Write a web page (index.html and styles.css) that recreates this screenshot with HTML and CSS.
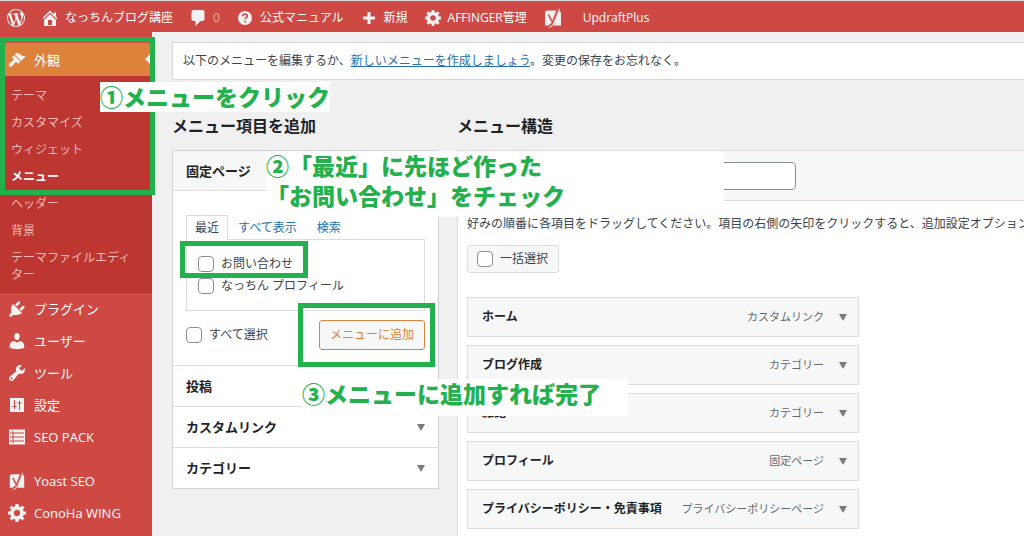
FILE: index.html
```html
<!DOCTYPE html>
<html lang="ja">
<head>
<meta charset="utf-8">
<title>メニュー</title>
<link rel="stylesheet" href="styles.css">
</head>
<body>
<svg class="sprite" aria-hidden="true">
  <symbol id="wp" viewBox="0 0 20 20"><path d="M20 10c0-5.51-4.49-10-10-10C4.48 0 0 4.49 0 10c0 5.52 4.48 10 10 10 5.51 0 10-4.48 10-10zM7.78 15.37L4.37 6.22c.55-.02 1.17-.08 1.17-.08.5-.06.44-1.13-.06-1.11 0 0-1.45.11-2.37.11-.18 0-.37 0-.58-.01C4.12 2.69 6.87 1.11 10 1.11c2.33 0 4.45.87 6.05 2.34-.68-.11-1.65.39-1.65 1.58 0 .74.45 1.36.9 2.1.35.61.55 1.36.55 2.46 0 1.49-1.4 5-1.4 5l-3.03-8.37c.54-.02.82-.17.82-.17.5-.05.44-1.25-.06-1.22 0 0-1.44.12-2.38.12-.87 0-2.33-.12-2.33-.12-.5-.03-.56 1.2-.06 1.22l.92.08 1.26 3.41zM17.41 10c.24-.64.74-1.87.43-4.25.7 1.29 1.05 2.71 1.05 4.25 0 3.29-1.73 6.24-4.4 7.78.97-2.59 1.94-5.2 2.92-7.78zM6.1 18.09C3.12 16.65 1.11 13.53 1.11 10c0-1.3.23-2.48.72-3.59C3.25 10.3 4.67 14.2 6.1 18.09zm4.03-6.63l2.58 6.98c-.86.29-1.76.45-2.71.45-.79 0-1.57-.11-2.29-.33.81-2.38 1.62-4.74 2.42-7.1z"/></symbol>
  <symbol id="home" viewBox="2 2 16 16"><path d="M16 8.5l1.53 1.53-1.06 1.06L10 4.6l-6.47 6.49-1.06-1.06L10 2.5l4 4v-2h2v4zm-6-2.46l6 5.99V18H4v-5.97zM12 17v-5H8v5h4z"/></symbol>
  <symbol id="comment" viewBox="2 2 15 16"><path d="M5 2h9c1.1 0 2 .9 2 2v7c0 1.1-.9 2-2 2h-2l-5 5v-5H5c-1.1 0-2-.9-2-2V4c0-1.1.9-2 2-2z"/></symbol>
  <symbol id="help" viewBox="0 0 16 16"><circle cx="8" cy="8" r="7"/><path class="cut-line" d="M5.8 6.2c0-3 4.5-2.8 4.5-.2 0 1.6-2.2 1.6-2.2 3.3M8.1 10.8v1.7"/></symbol>
  <symbol id="plus" viewBox="0 0 16 16"><path d="M6.500 2h3v4.500H14v3H9.500V14h-3V9.500H2v-3h4.500z"/></symbol>
  <symbol id="gear" viewBox="1 2 17 17"><path d="M18 12h-2.180c-.17.7-.44 1.350-.81 1.930l1.540 1.540-2.100 2.100-1.540-1.540c-.58.360-1.230.630-1.910.790V19H8v-2.180c-.68-.16-1.330-.43-1.910-.79l-1.540 1.540-2.120-2.120 1.540-1.540c-.36-.58-.63-1.230-.79-1.910H1V9.030h2.170c.16-.7.440-1.350.8-1.940L2.430 5.550l2.100-2.100 1.540 1.540c.58-.37 1.240-.64 1.930-.81V2h3v2.180c.68.160 1.330.430 1.910.790l1.540-1.540 2.120 2.120-1.540 1.540c.36.590.640 1.240.8 1.940H18V12zm-8.500 1.500c1.660 0 3-1.340 3-3s-1.340-3-3-3-3 1.340-3 3 1.340 3 3 3z"/></symbol>
  <symbol id="yoast" viewBox="0 0 18 20"><path d="M3.500 2.500H13L8 17.500H1V5C1 3.500 2 2.500 3.500 2.500zM15 3c1.300.3 2 1.200 2 2.500v12H9.500z"/><path class="cut-line" d="M4.500 6.500l3.300 7M13.500 1.500L8.800 13.500C8 16 7 17.500 4.500 17.800"/><path class="edge" d="M15.500.8L10 14.500C9 17.500 7.500 19.200 4.500 19.300"/></symbol>
  <symbol id="brush" viewBox="0 1 20 18"><path d="M14.480 11.060L7.410 3.990l1.500-1.500c.5-.56 2.300-.47 3.510.320 1.210.8 1.430 1.280 2.910 2.100 1.180.640 2.450 1.260 4.450.850zm-.71.710L6.700 4.700 4.930 6.470c-.39.390-.39 1.020 0 1.410l1.060 1.060c.39.390.39 1.030 0 1.420-.6.6-1.430 1.110-2.210 1.690-.35.260-.7.530-1.010.840C1.430 14.230.4 16.080 1.400 17.070c.99 1 2.840-.03 4.180-1.360.31-.31.580-.66.850-1.020.57-.78 1.080-1.610 1.690-2.210.39-.39 1.020-.39 1.410 0l1.060 1.060c.39.390 1.020.390 1.410 0z"/></symbol>
  <symbol id="plug" viewBox="1 1 18 18"><path d="M13.110 4.360L9.870 7.600 8 5.730l3.240-3.240c.35-.34 1.050-.2 1.560.320.520.510.660 1.210.310 1.550zm-8 1.770l.91-1.120 9.010 9.010-1.190.840c-.71.710-2.630 1.160-3.820 1.160H6.140L4.900 17.260c-.59.590-1.540.590-2.120 0-.59-.58-.59-1.530 0-2.120l1.240-1.240v-3.880c0-1.130.4-3.190 1.090-3.890zm7.260 3.970l3.240-3.240c.34-.35 1.040-.21 1.550.310.520.510.660 1.210.310 1.550l-3.240 3.250z"/></symbol>
  <symbol id="user" viewBox="1 1 18 18"><path d="M10 9.250c-2.270 0-2.730-3.440-2.730-3.440C7 4.020 7.820 2 9.970 2c2.160 0 2.980 2.020 2.710 3.810 0 0-.41 3.440-2.680 3.440zm0 2.570L12.720 10c2.390 0 4.520 2.330 4.520 4.530v2.490s-3.650 1.130-7.240 1.130c-3.650 0-7.240-1.130-7.240-1.130v-2.490c0-2.250 1.940-4.480 4.470-4.480z"/></symbol>
  <symbol id="wrench" viewBox="1 1 18 18"><path d="M16.680 9.770c-1.340 1.340-3.300 1.670-4.950.990l-5.410 6.520c-.99.990-2.590.990-3.580 0s-.99-2.590 0-3.570l6.520-5.420c-.68-1.650-.35-3.610.990-4.950 1.280-1.280 3.120-1.620 4.720-1.060l-2.890 2.890 2.820 2.820 2.860-2.870c.53 1.580.180 3.390-1.080 4.650zM3.810 16.210c.4.390 1.040.390 1.430 0 .4-.4.4-1.040 0-1.430-.39-.4-1.030-.4-1.430 0-.39.390-.39 1.030 0 1.430z"/></symbol>
  <symbol id="sliders" viewBox="0 0 18 18"><path d="M2 2h14v14H2z"/><path class="cut-thin" d="M6.500 4v9M4.500 10.500h4M11.500 5v9M9.500 7h4"/></symbol>
  <symbol id="list" viewBox="0 0 18 18"><path d="M1 1.500h16v15H1z"/><path class="cut-thin" d="M2 5h14M2 9h14M2 13h14M5 3v12"/></symbol>
</svg>

<div class="page">
  <header class="bar">
    <a class="bar-item" href="#" aria-label="WordPress"><svg class="icon icon-lg"><use href="#wp"/></svg></a>
    <a class="bar-item" href="#"><svg class="icon"><use href="#home"/></svg>なっちんブログ講座</a>
    <a class="bar-item" href="#"><svg class="icon"><use href="#comment"/></svg><span class="faded">0</span></a>
    <a class="bar-item" href="#"><svg class="icon"><use href="#help"/></svg>公式マニュアル</a>
    <a class="bar-item" href="#"><svg class="icon"><use href="#plus"/></svg>新規</a>
    <a class="bar-item" href="#"><svg class="icon"><use href="#gear"/></svg>AFFINGER管理</a>
    <a class="bar-item" href="#" aria-label="Yoast"><svg class="icon icon-xl"><use href="#yoast"/></svg></a>
    <a class="bar-item last" href="#">UpdraftPlus</a>
  </header>

  <div class="body">
    <nav class="side">
      <a class="side-item current" href="#"><svg class="icon icon-lg"><use href="#brush"/></svg>外観</a>
      <ul class="sub">
        <li><a href="#">テーマ</a></li>
        <li><a href="#">カスタマイズ</a></li>
        <li><a href="#">ウィジェット</a></li>
        <li><a class="on" href="#">メニュー</a></li>
        <li><a href="#">ヘッダー</a></li>
        <li><a href="#">背景</a></li>
        <li><a href="#">テーマファイルエディター</a></li>
      </ul>
      <a class="side-item" href="#"><svg class="icon icon-lg"><use href="#plug"/></svg>プラグイン</a>
      <a class="side-item" href="#"><svg class="icon icon-lg"><use href="#user"/></svg>ユーザー</a>
      <a class="side-item" href="#"><svg class="icon icon-lg"><use href="#wrench"/></svg>ツール</a>
      <a class="side-item" href="#"><svg class="icon icon-lg"><use href="#sliders"/></svg>設定</a>
      <a class="side-item" href="#"><svg class="icon icon-lg"><use href="#list"/></svg>SEO PACK</a>
      <a class="side-item spaced" href="#"><svg class="icon icon-lg"><use href="#yoast"/></svg>Yoast SEO</a>
      <a class="side-item" href="#"><svg class="icon icon-lg"><use href="#gear"/></svg>ConoHa WING</a>
    </nav>

    <main class="main">
      <p class="notice">以下のメニューを編集するか、<a href="#">新しいメニューを作成しましょう</a>。変更の保存をお忘れなく。</p>
      <div class="columns">
        <section class="add">
          <h2>メニュー項目を追加</h2>
          <div class="card">
            <h3 class="card-head open">固定ページ</h3>
            <div class="card-body">
              <div class="tabs"><a class="tab active" href="#">最近</a><a class="tab" href="#">すべて表示</a><a class="tab" href="#">検索</a></div>
              <div class="panel">
                <label class="check"><input type="checkbox">お問い合わせ</label>
                <label class="check"><input type="checkbox">なっちん プロフィール</label>
              </div>
              <div class="actions">
                <label class="check"><input type="checkbox">すべて選択</label>
                <button class="add-btn" type="button">メニューに追加</button>
              </div>
            </div>
            <h3 class="card-head">投稿</h3>
            <h3 class="card-head">カスタムリンク<span class="arrow"></span></h3>
            <h3 class="card-head">カテゴリー<span class="arrow"></span></h3>
          </div>
        </section>

        <section class="structure">
          <h2>メニュー構造</h2>
          <div class="frame">
            <div class="frame-head"><input class="name" type="text" aria-label="メニュー名"></div>
            <div class="frame-body">
              <p class="desc">好みの順番に各項目をドラッグしてください。項目の右側の矢印をクリックすると、追加設定オプション</p>
              <label class="check bulk"><input type="checkbox">一括選択</label>
              <ul class="items">
                <li class="item"><b>ホーム</b><span class="type">カスタムリンク</span><span class="arrow"></span></li>
                <li class="item"><b>ブログ作成</b><span class="type">カテゴリー</span><span class="arrow"></span></li>
                <li class="item"><b>雑記</b><span class="type">カテゴリー</span><span class="arrow"></span></li>
                <li class="item"><b>プロフィール</b><span class="type">固定ページ</span><span class="arrow"></span></li>
                <li class="item"><b>プライバシーポリシー・免責事項</b><span class="type">プライバシーポリシーページ</span><span class="arrow"></span></li>
              </ul>
            </div>
          </div>
        </section>
      </div>
    </main>
  </div>

  <div class="mark mark-side"></div>
  <div class="mark mark-check"></div>
  <div class="mark mark-add"></div>
  <p class="note note-1">①メニューをクリック</p>
  <p class="note note-2">②「最近」に先ほど作った<br>「お問い合わせ」をチェック</p>
  <p class="note note-3">③メニューに追加すれば完了</p>
</div>
</body>
</html>
```
FILE: styles.css
```css
* { box-sizing: border-box; }
body {
  margin: 0;
  background: #f0f0f1;
  color: #3c434a;
  font: 12px/18px "Open Sans", "Noto Sans CJK JP", sans-serif;
}
h2, h3, p, ul { margin: 0; padding: 0; }
ul { list-style: none; }
a { color: #2271b1; }
.sprite { position: absolute; width: 0; height: 0; }
.page {
  position: relative;
  min-height: 100vh;
  overflow: hidden;
  display: flex;
  flex-direction: column;
}

.icon { width: 16px; height: 16px; flex: none; fill: #f3f1f1; }
.icon-lg { width: 18px; height: 18px; }
.icon-xl { width: 18px; height: 20px; }
.cut-line { fill: none; stroke: #cf4944; stroke-width: 1.6; }
.cut-thin { fill: none; stroke: #cf4944; stroke-width: 1; }
.edge { fill: none; stroke: #f3f1f1; stroke-width: 1; }

.bar {
  display: flex;
  align-items: center;
  gap: 17px;
  height: 32px;
  padding: 2px 7px 0;
  border-top: 1px solid #dcdcde;
  background: #cf4944;
}
.bar-item {
  display: flex;
  align-items: center;
  gap: 7px;
  color: #fff;
  text-decoration: none;
  white-space: nowrap;
}
.faded { color: #eba9a6; }
.last { margin-left: 4px; }

.body { display: flex; flex: 1; }
.side { flex: none; width: 152px; padding-top: 11px; background: #cf4944; }
.side-item {
  display: flex;
  align-items: center;
  gap: 8px;
  height: 32px;
  padding: 0 8px;
  color: #fff;
  font-size: 13px;
  text-decoration: none;
}
.spaced { margin-top: 12px; }
.current { position: relative; height: 33px; background: #dd823b; }
.current::after {
  content: "";
  position: absolute;
  right: 0;
  top: 9px;
  border: 7px solid transparent;
  border-left-width: 0;
  border-right-color: #f0f0f1;
}
.sub { padding: 6px 0 5px; background: #be3631; }
.sub a {
  display: block;
  padding: 5px 16px 5px 11px;
  color: #f1b8b5;
  line-height: 17px;
  text-decoration: none;
}
.sub .on { color: #fff; font-weight: 600; }

.main {
  display: flex;
  flex-direction: column;
  flex: 1;
  min-width: 0;
  padding: 10px 0 0 20px;
}
.notice {
  padding: 9px 10px;
  border: 1px solid #d5d6d8;
  border-right: 0;
  background: #fff;
}
.columns { display: flex; flex: 1; gap: 18px; padding-top: 34px; }
h2 { padding-bottom: 12px; color: #1d2327; font-size: 16px; line-height: 24px; font-weight: 600; }
.add { flex: none; width: 267px; }
.card { border: 1px solid #d0d1d4; background: #fff; }
.card-head {
  display: flex;
  align-items: center;
  justify-content: space-between;
  height: 41px;
  padding: 0 13px;
  border-top: 1px solid #dcdcde;
  color: #1d2327;
  font-size: 13px;
  font-weight: 600;
}
.card-head.open { height: 40px; border-top: 0; border-bottom: 1px solid #dcdcde; background: #f6f7f7; }
.card-body { padding: 24px 13px 15px; }
.tabs { display: flex; margin-bottom: -1px; }
.tab { height: 25px; padding: 3px 9px; border: 1px solid transparent; border-bottom: 0; text-decoration: none; }
.active { position: relative; padding: 3px 8px; border-color: #dcdcde; background: #fff; color: #3c434a; }
.panel { display: grid; gap: 4px; padding: 15px 11px; border: 1px solid #dcdcde; }
.check { display: flex; align-items: center; gap: 7px; white-space: nowrap; }
.check input {
  appearance: none;
  width: 16px;
  height: 16px;
  margin: 0;
  border: 1px solid #8c8f94;
  border-radius: 4px;
  background: #fff;
}
.actions { display: flex; align-items: center; justify-content: space-between; padding-top: 9px; }
.add-btn {
  height: 30px;
  padding: 0 10px;
  border: 1px solid #dd823b;
  border-radius: 3px;
  background: #f6f7f7;
  color: #dd823b;
  font: inherit;
}
.arrow {
  flex: none;
  border: 4px solid transparent;
  border-top: 7px solid #787c82;
  border-bottom: 0;
}

.structure { display: flex; flex-direction: column; flex: 1; min-width: 0; }
.frame { flex: 1; border-top: 1px solid #dcdcde; border-left: 1px solid #dcdcde; background: #fff; }
.frame-head {
  display: flex;
  align-items: center;
  height: 50px;
  padding: 0 80px;
  border-bottom: 1px solid #dcdcde;
  background: #f6f7f7;
}
.name { width: 258px; height: 28px; border: 1px solid #8c8f94; border-radius: 4px; background: #fff; }
.frame-body { padding: 14px 0 0 9px; }
.desc { overflow: hidden; white-space: nowrap; }
.bulk {
  width: fit-content;
  margin-top: 12px;
  padding: 4px 10px 4px 9px;
  border: 1px solid #dcdcde;
  border-radius: 3px;
  background: #f6f7f7;
}
.items { display: grid; gap: 8px; max-width: 392px; margin-top: 24px; }
.item {
  display: flex;
  align-items: center;
  height: 40px;
  padding: 0 11px 0 14px;
  border: 1px solid #dcdcde;
  background: #f6f7f7;
  white-space: nowrap;
}
.item b { color: #1d2327; font-weight: 600; }
.type { margin: 0 15px 0 auto; color: #646970; font-size: 11px; }

.mark { position: absolute; border: 5px solid #22b14c; }
.mark-side { left: 0; top: 37px; width: 155px; height: 158px; }
.mark-check { left: 180px; top: 241px; width: 128px; height: 37px; }
.mark-add { left: 298px; top: 303px; width: 137px; height: 64px; }
.note {
  position: absolute;
  background: #fff;
  color: #22b14c;
  font-size: 23px;
  line-height: 30px;
  font-weight: 900;
  white-space: nowrap;
}
.note-1 { left: 100px; top: 82px; }
.note-2 { left: 266px; top: 151px; width: 458px; padding-bottom: 6px; }
.note-3 { left: 302px; top: 379px; width: 326px; padding-bottom: 7px; }
```
